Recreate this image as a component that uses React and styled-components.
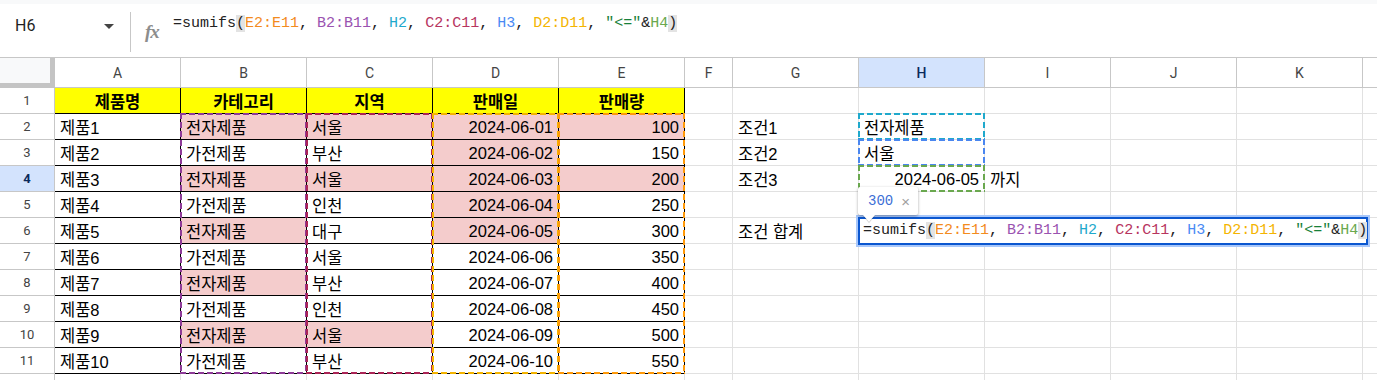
import React from 'react';
import styled, { createGlobalStyle } from 'styled-components';

const GlobalStyle = createGlobalStyle`
  html, body {
    margin: 0;
    padding: 0;
    background: #fff;
    overflow: hidden;
  }
  body {
    font-family: "Liberation Sans", "Noto Sans CJK KR", Arial, sans-serif;
  }
`;

const COLS = [55, 126, 126, 126, 126, 126, 48, 126, 126, 126, 126, 126, 40];
const LETTERS = ['', 'A', 'B', 'C', 'D', 'E', 'F', 'G', 'H', 'I', 'J', 'K', ''];
const HEAD_H = 30;
const ROW_H = 26;

const rows = [
    ['제품1', '전자제품', '서울', '2024-06-01', 100],
    ['제품2', '가전제품', '부산', '2024-06-02', 150],
    ['제품3', '전자제품', '서울', '2024-06-03', 200],
    ['제품4', '가전제품', '인천', '2024-06-04', 250],
    ['제품5', '전자제품', '대구', '2024-06-05', 300],
    ['제품6', '가전제품', '서울', '2024-06-06', 350],
    ['제품7', '전자제품', '부산', '2024-06-07', 400],
    ['제품8', '가전제품', '인천', '2024-06-08', 450],
    ['제품9', '전자제품', '서울', '2024-06-09', 500],
    ['제품10', '가전제품', '부산', '2024-06-10', 550],
];

// which cells got the pink fill, by row number
const pink = { 2: 'BCDE', 3: 'D', 4: 'BCDE', 5: 'D', 6: 'BD', 8: 'B', 10: 'BC' };

const side = {
    G2: { text: '조건1' },
    H2: { text: '전자제품' },
    G3: { text: '조건2' },
    H3: { text: '서울' },
    G4: { text: '조건3' },
    H4: { text: '2024-06-05', align: 'right' },
    I4: { text: '까지' },
    G6: { text: '조건 합계' },
};

const ranges = [
    { col: 2, r0: 2, r1: 11, color: '#8e3b98' },
    { col: 3, r0: 2, r1: 11, color: '#ab2556' },
    { col: 4, r0: 2, r1: 11, color: '#f4b400' },
    { col: 5, r0: 2, r1: 11, color: '#ff9a0a' },
    { col: 8, r0: 2, r1: 2, color: '#1fa9cc' },
    { col: 8, r0: 3, r1: 3, color: '#4a86f0' },
    { col: 8, r0: 4, r1: 4, color: '#6aa84f' },
];

const tokens = [
    ['=sumifs'], ['(', 'paren'], ['E2:E11', '#f38b1e'], [', '], ['B2:B11', '#9a52b0'], [', '],
    ['H2', '#1ea9cc'], [', '], ['C2:C11', '#b7345e'], [', '], ['H3', '#4a8af4'], [', '],
    ['D2:D11', '#f4b400'], [', '], ['"<="', '#188038'], ['&'], ['H4', '#6aa84f'], [')', 'paren'],
];

const colLeft = (c) => COLS.slice(0, c).reduce((a, b) => a + b, 0);

/* ---------- formula bar ---------- */

const TopStrip = styled.div`
    height: 4px;
    background: #f8f9fa;
`;

const FormulaBar = styled.div`
    height: 53px;
    display: flex;
    align-items: flex-start;
    border-bottom: 1px solid #c7c7c7;
`;

const NameBox = styled.div`
    width: 130px;
    box-sizing: border-box;
    padding: 12px 16px 0 15px;
    display: flex;
    align-items: center;
    justify-content: space-between;
    font-family: "Roboto", "Liberation Sans", sans-serif;
    font-size: 16px;
    line-height: 20px;
    color: #1f1f1f;
`;

const Caret = styled.span`
    width: 0;
    height: 0;
    border-left: 5px solid transparent;
    border-right: 5px solid transparent;
    border-top: 5px solid #444;
`;

const Divider = styled.div`
    width: 1px;
    height: 40px;
    margin-top: 8px;
    background: #c7c7c7;
`;

const Fx = styled.span`
    margin: 18px 0 0 14px;
    width: 28px;
    font-family: "Liberation Serif", serif;
    font-style: italic;
    font-weight: 700;
    font-size: 19px;
    line-height: 20px;
    color: #8d8d8d;
    letter-spacing: -1px;
`;

const FormulaLine = styled.div`
    padding-top: ${(p) => p.$top || 0}px;
    font-family: "Liberation Mono", "DejaVu Sans Mono", monospace;
    font-size: 15px;
    line-height: 20px;
    color: #222;
    white-space: pre;
`;

const Tok = styled.span`
    color: ${(p) => p.$color || 'inherit'};
    background: ${(p) => (p.$paren ? '#e3e3e3' : 'transparent')};
`;

const Formula = ({ top }) => (
    <FormulaLine $top={top}>
        {tokens.map(([t, c], i) => (
            <Tok key={i} $paren={c === 'paren'} $color={c && c !== 'paren' ? c : undefined}>
                {t}
            </Tok>
        ))}
    </FormulaLine>
);

/* ---------- grid ---------- */

const Sheet = styled.div`
    position: relative;
    display: grid;
    grid-template-columns: ${COLS.map((c) => c + 'px').join(' ')};
    grid-template-rows: ${HEAD_H}px repeat(12, ${ROW_H}px);
`;

const Corner = styled.div`
    background: #f8f9fa;
    border-right: 5px solid #c4c4c4;
    border-bottom: 5px solid #c4c4c4;
    box-sizing: border-box;
`;

const ColHead = styled.div`
    box-sizing: border-box;
    display: flex;
    align-items: center;
    justify-content: center;
    border-right: 1px solid #c7c7c7;
    border-bottom: 1px solid #c7c7c7;
    background: ${(p) => (p.$active ? '#d3e3fd' : '#fff')};
    color: ${(p) => (p.$active ? '#0b2a5c' : '#444')};
    font-family: "Roboto", "Liberation Sans", sans-serif;
    font-weight: ${(p) => (p.$active ? 500 : 400)};
    font-size: 14px;
`;

const RowHead = styled.div`
    box-sizing: border-box;
    display: flex;
    align-items: center;
    justify-content: center;
    border-right: 1px solid #c7c7c7;
    border-bottom: 1px solid #c7c7c7;
    background: ${(p) => (p.$active ? '#d3e3fd' : '#fff')};
    color: ${(p) => (p.$active ? '#0b2a5c' : '#444')};
    font-family: "Roboto", "Liberation Sans", sans-serif;
    font-weight: ${(p) => (p.$active ? 700 : 400)};
    font-size: 13px;
`;

const Cell = styled.div`
    box-sizing: border-box;
    display: flex;
    align-items: center;
    justify-content: ${(p) =>
        p.$align === 'right' ? 'flex-end' : p.$align === 'center' ? 'center' : 'flex-start'};
    padding: 1px 5px 0 5px;
    border-right: 1px solid ${(p) => (p.$table ? '#000' : '#e1e1e1')};
    border-bottom: 1px solid ${(p) => (p.$table ? '#000' : '#e1e1e1')};
    background: ${(p) => p.$bg || '#fff'};
    font-size: 16.5px;
    font-weight: ${(p) => (p.$bold ? 700 : 400)};
    color: #000;
    white-space: nowrap;
    overflow: visible;
`;

/* ---------- overlays ---------- */

// dashed outline drawn with gradients so the dash length matches sheets (6 on / 3 off)
const RangeBox = styled.div`
    position: absolute;
    pointer-events: none;
    background:
        repeating-linear-gradient(90deg, ${(p) => p.$color} 0 6px, transparent 6px 9px) top left / 100% 2px no-repeat,
        repeating-linear-gradient(90deg, ${(p) => p.$color} 0 6px, transparent 6px 9px) bottom left / 100% 2px no-repeat,
        repeating-linear-gradient(180deg, ${(p) => p.$color} 0 6px, transparent 6px 9px) top left / 2px 100% no-repeat,
        repeating-linear-gradient(180deg, ${(p) => p.$color} 0 6px, transparent 6px 9px) top right / 2px 100% no-repeat;
`;

const Editor = styled.div`
    position: absolute;
    left: 858px;
    top: ${217 - 58}px;
    width: 510px;
    height: 28px;
    box-sizing: border-box;
    border: 2px solid #0b57d0;
    box-shadow: 0 0 0 2px #a8c7fa;
    background: #fff;
    padding: 2px 0 0 3px;
`;

const Tip = styled.div`
    position: absolute;
    left: 858px;
    top: ${187 - 58}px;
    height: 28px;
    padding: 0 8px 0 10px;
    display: flex;
    align-items: center;
    gap: 8px;
    background: #fff;
    border-radius: 2px;
    box-shadow: 0 1px 3px rgba(0, 0, 0, 0.35);
    font-family: "Liberation Mono", monospace;
    font-size: 14px;
    color: #3c6fd6;

    &::after {
        content: '';
        position: absolute;
        left: 5px;
        bottom: -7px;
        border-left: 6px solid transparent;
        border-right: 6px solid transparent;
        border-top: 7px solid #fff;
        filter: drop-shadow(0 1px 0 rgba(0, 0, 0, 0.2));
    }
`;

const Close = styled.span`
    font-family: "Liberation Sans", sans-serif;
    font-size: 15px;
    color: #a0a0a0;
`;

function renderCell(r, c) {
    const letter = LETTERS[c];
    const key = `${c}-${r}`;
    if (r === 1 && c >= 1 && c <= 5) {
        const heads = ['제품명', '카테고리', '지역', '판매일', '판매량'];
        return (
            <Cell key={key} $table $bg="#ffff00" $bold $align="center">
                {heads[c - 1]}
            </Cell>
        );
    }
    if (r >= 2 && r <= 11 && c >= 1 && c <= 5) {
        const v = rows[r - 2][c - 1];
        const bg = pink[r] && pink[r].includes(letter) ? '#f4cccc' : undefined;
        return (
            <Cell key={key} $table $bg={bg} $align={c >= 4 ? 'right' : 'left'}>
                {v}
            </Cell>
        );
    }
    const s = side[`${letter}${r}`];
    return (
        <Cell key={key} $align={s && s.align}>
            {s ? s.text : ''}
        </Cell>
    );
}

export default function App() {
    const grid = [];
    grid.push(<Corner key="corner" />);
    for (let c = 1; c < COLS.length; c++) {
        grid.push(
            <ColHead key={'h' + c} $active={LETTERS[c] === 'H'}>
                {LETTERS[c]}
            </ColHead>
        );
    }
    for (let r = 1; r <= 12; r++) {
        grid.push(
            <RowHead key={'r' + r} $active={r === 4}>
                {r <= 11 ? r : ''}
            </RowHead>
        );
        for (let c = 1; c < COLS.length; c++) grid.push(renderCell(r, c));
    }

    return (
        <>
            <GlobalStyle />
            <TopStrip />
            <FormulaBar>
                <NameBox>
                    H6
                    <Caret />
                </NameBox>
                <Divider />
                <Fx>fx</Fx>
                <Formula top={10} />
            </FormulaBar>
            <Sheet>
                {grid}
                {ranges.map((g, i) => (
                    <RangeBox
                        key={i}
                        $color={g.color}
                        style={{
                            left: colLeft(g.col) - 1,
                            top: HEAD_H + (g.r0 - 1) * ROW_H - 1,
                            width: COLS[g.col] + 1,
                            height: (g.r1 - g.r0 + 1) * ROW_H + 1,
                        }}
                    />
                ))}
                <Editor>
                    <Formula />
                </Editor>
                <Tip>
                    300
                    <Close>×</Close>
                </Tip>
            </Sheet>
        </>
    );
}
